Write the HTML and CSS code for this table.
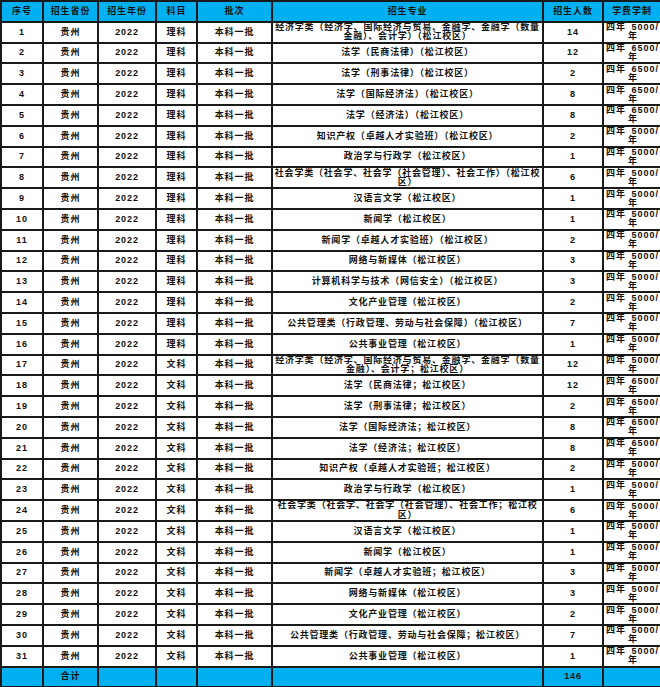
FILE: index.html
```html
<!DOCTYPE html>
<html lang="zh">
<head>
<meta charset="utf-8">
<link rel="stylesheet" href="styles.css">
</head>
<body>
<table class="plan">
<colgroup>
<col class="c-no"><col class="c-prov"><col class="c-year"><col class="c-subj"><col class="c-batch"><col class="c-major"><col class="c-num"><col class="c-fee">
</colgroup>
<thead>
<tr class="head"><th>序号</th><th>招生省份</th><th>招生年份</th><th>科目</th><th>批次</th><th>招生专业</th><th>招生人数</th><th>学费学制</th></tr>
</thead>
<tbody>
<tr><td>1</td><td>贵州</td><td>2022</td><td>理科</td><td>本科一批</td><td class="major">经济学类（经济学、国际经济与贸易、金融学、金融学（数量金融）、会计学）（松江校区）</td><td>14</td><td class="fee"><span class="l1">四年 5000/</span><span class="l2">年</span></td></tr>
<tr><td>2</td><td>贵州</td><td>2022</td><td>理科</td><td>本科一批</td><td class="major">法学（民商法律）（松江校区）</td><td>12</td><td class="fee"><span class="l1">四年 6500/</span><span class="l2">年</span></td></tr>
<tr><td>3</td><td>贵州</td><td>2022</td><td>理科</td><td>本科一批</td><td class="major">法学（刑事法律）（松江校区）</td><td>2</td><td class="fee"><span class="l1">四年 6500/</span><span class="l2">年</span></td></tr>
<tr><td>4</td><td>贵州</td><td>2022</td><td>理科</td><td>本科一批</td><td class="major">法学（国际经济法）（松江校区）</td><td>8</td><td class="fee"><span class="l1">四年 6500/</span><span class="l2">年</span></td></tr>
<tr><td>5</td><td>贵州</td><td>2022</td><td>理科</td><td>本科一批</td><td class="major">法学（经济法）（松江校区）</td><td>8</td><td class="fee"><span class="l1">四年 6500/</span><span class="l2">年</span></td></tr>
<tr><td>6</td><td>贵州</td><td>2022</td><td>理科</td><td>本科一批</td><td class="major">知识产权（卓越人才实验班）（松江校区）</td><td>2</td><td class="fee"><span class="l1">四年 5000/</span><span class="l2">年</span></td></tr>
<tr><td>7</td><td>贵州</td><td>2022</td><td>理科</td><td>本科一批</td><td class="major">政治学与行政学（松江校区）</td><td>1</td><td class="fee"><span class="l1">四年 5000/</span><span class="l2">年</span></td></tr>
<tr><td>8</td><td>贵州</td><td>2022</td><td>理科</td><td>本科一批</td><td class="major">社会学类（社会学、社会学（社会管理）、社会工作）（松江校区）</td><td>6</td><td class="fee"><span class="l1">四年 5000/</span><span class="l2">年</span></td></tr>
<tr><td>9</td><td>贵州</td><td>2022</td><td>理科</td><td>本科一批</td><td class="major">汉语言文学（松江校区）</td><td>1</td><td class="fee"><span class="l1">四年 5000/</span><span class="l2">年</span></td></tr>
<tr><td>10</td><td>贵州</td><td>2022</td><td>理科</td><td>本科一批</td><td class="major">新闻学（松江校区）</td><td>1</td><td class="fee"><span class="l1">四年 5000/</span><span class="l2">年</span></td></tr>
<tr><td>11</td><td>贵州</td><td>2022</td><td>理科</td><td>本科一批</td><td class="major">新闻学（卓越人才实验班）（松江校区）</td><td>2</td><td class="fee"><span class="l1">四年 5000/</span><span class="l2">年</span></td></tr>
<tr><td>12</td><td>贵州</td><td>2022</td><td>理科</td><td>本科一批</td><td class="major">网络与新媒体（松江校区）</td><td>3</td><td class="fee"><span class="l1">四年 5000/</span><span class="l2">年</span></td></tr>
<tr><td>13</td><td>贵州</td><td>2022</td><td>理科</td><td>本科一批</td><td class="major">计算机科学与技术（网信安全）（松江校区）</td><td>3</td><td class="fee"><span class="l1">四年 5000/</span><span class="l2">年</span></td></tr>
<tr><td>14</td><td>贵州</td><td>2022</td><td>理科</td><td>本科一批</td><td class="major">文化产业管理（松江校区）</td><td>2</td><td class="fee"><span class="l1">四年 5000/</span><span class="l2">年</span></td></tr>
<tr><td>15</td><td>贵州</td><td>2022</td><td>理科</td><td>本科一批</td><td class="major">公共管理类（行政管理、劳动与社会保障）（松江校区）</td><td>7</td><td class="fee"><span class="l1">四年 5000/</span><span class="l2">年</span></td></tr>
<tr><td>16</td><td>贵州</td><td>2022</td><td>理科</td><td>本科一批</td><td class="major">公共事业管理（松江校区）</td><td>1</td><td class="fee"><span class="l1">四年 5000/</span><span class="l2">年</span></td></tr>
<tr><td>17</td><td>贵州</td><td>2022</td><td>文科</td><td>本科一批</td><td class="major">经济学类（经济学、国际经济与贸易、金融学、金融学（数量金融）、会计学；松江校区）</td><td>12</td><td class="fee"><span class="l1">四年 5000/</span><span class="l2">年</span></td></tr>
<tr><td>18</td><td>贵州</td><td>2022</td><td>文科</td><td>本科一批</td><td class="major">法学（民商法律；松江校区）</td><td>12</td><td class="fee"><span class="l1">四年 6500/</span><span class="l2">年</span></td></tr>
<tr><td>19</td><td>贵州</td><td>2022</td><td>文科</td><td>本科一批</td><td class="major">法学（刑事法律；松江校区）</td><td>2</td><td class="fee"><span class="l1">四年 6500/</span><span class="l2">年</span></td></tr>
<tr><td>20</td><td>贵州</td><td>2022</td><td>文科</td><td>本科一批</td><td class="major">法学（国际经济法；松江校区）</td><td>8</td><td class="fee"><span class="l1">四年 6500/</span><span class="l2">年</span></td></tr>
<tr><td>21</td><td>贵州</td><td>2022</td><td>文科</td><td>本科一批</td><td class="major">法学（经济法；松江校区）</td><td>8</td><td class="fee"><span class="l1">四年 6500/</span><span class="l2">年</span></td></tr>
<tr><td>22</td><td>贵州</td><td>2022</td><td>文科</td><td>本科一批</td><td class="major">知识产权（卓越人才实验班；松江校区）</td><td>2</td><td class="fee"><span class="l1">四年 5000/</span><span class="l2">年</span></td></tr>
<tr><td>23</td><td>贵州</td><td>2022</td><td>文科</td><td>本科一批</td><td class="major">政治学与行政学（松江校区）</td><td>1</td><td class="fee"><span class="l1">四年 5000/</span><span class="l2">年</span></td></tr>
<tr><td>24</td><td>贵州</td><td>2022</td><td>文科</td><td>本科一批</td><td class="major">社会学类（社会学、社会学（社会管理）、社会工作；松江校区）</td><td>6</td><td class="fee"><span class="l1">四年 5000/</span><span class="l2">年</span></td></tr>
<tr><td>25</td><td>贵州</td><td>2022</td><td>文科</td><td>本科一批</td><td class="major">汉语言文学（松江校区）</td><td>1</td><td class="fee"><span class="l1">四年 5000/</span><span class="l2">年</span></td></tr>
<tr><td>26</td><td>贵州</td><td>2022</td><td>文科</td><td>本科一批</td><td class="major">新闻学（松江校区）</td><td>1</td><td class="fee"><span class="l1">四年 5000/</span><span class="l2">年</span></td></tr>
<tr><td>27</td><td>贵州</td><td>2022</td><td>文科</td><td>本科一批</td><td class="major">新闻学（卓越人才实验班；松江校区）</td><td>3</td><td class="fee"><span class="l1">四年 5000/</span><span class="l2">年</span></td></tr>
<tr><td>28</td><td>贵州</td><td>2022</td><td>文科</td><td>本科一批</td><td class="major">网络与新媒体（松江校区）</td><td>3</td><td class="fee"><span class="l1">四年 5000/</span><span class="l2">年</span></td></tr>
<tr><td>29</td><td>贵州</td><td>2022</td><td>文科</td><td>本科一批</td><td class="major">文化产业管理（松江校区）</td><td>2</td><td class="fee"><span class="l1">四年 5000/</span><span class="l2">年</span></td></tr>
<tr><td>30</td><td>贵州</td><td>2022</td><td>文科</td><td>本科一批</td><td class="major">公共管理类（行政管理、劳动与社会保障；松江校区）</td><td>7</td><td class="fee"><span class="l1">四年 5000/</span><span class="l2">年</span></td></tr>
<tr><td>31</td><td>贵州</td><td>2022</td><td>文科</td><td>本科一批</td><td class="major">公共事业管理（松江校区）</td><td>1</td><td class="fee"><span class="l1">四年 5000/</span><span class="l2">年</span></td></tr>
<tr class="total"><td></td><td>合计</td><td></td><td></td><td></td><td></td><td>146</td><td></td></tr>
</tbody>
</table>
</body>
</html>
```
FILE: styles.css
```css
html, body {
  margin: 0;
  padding: 0;
  background: #ffffff;
}

.plan {
  border-collapse: collapse;
  table-layout: fixed;
  width: 660px;
  height: 687px;
  font-family: "Liberation Sans", "Noto Sans CJK SC", sans-serif;
  font-weight: bold;
  font-size: 9px;
  color: #111111;
}

.c-no { width: 42px; }
.c-prov { width: 55px; }
.c-year { width: 58px; }
.c-subj { width: 41px; }
.c-batch { width: 75px; }
.c-major { width: 271px; }
.c-num { width: 60px; }
.c-fee { width: 58px; }

.plan th,
.plan td {
  border: 2px solid #1a1a1a;
  padding: 0;
  text-align: center;
  vertical-align: middle;
  line-height: 9.2px;
  letter-spacing: 0.9px;
  overflow: hidden;
  white-space: normal;
}

.plan tr {
  height: 20.8px;
}

.head th {
  background: #00b0f0;
  font-weight: bold;
}

.total td {
  background: #00b0f0;
}

.plan td.major {
  letter-spacing: 0.8px;
}

.plan td.fee {
  text-align: left;
  padding-left: 2px;
}

.l1,
.l2 {
  display: block;
  white-space: nowrap;
  line-height: 9px;
}

.l1 {
  letter-spacing: 1px;
  word-spacing: 2px;
}

.l2 {
  padding-left: 22px;
  letter-spacing: 0;
}
```
